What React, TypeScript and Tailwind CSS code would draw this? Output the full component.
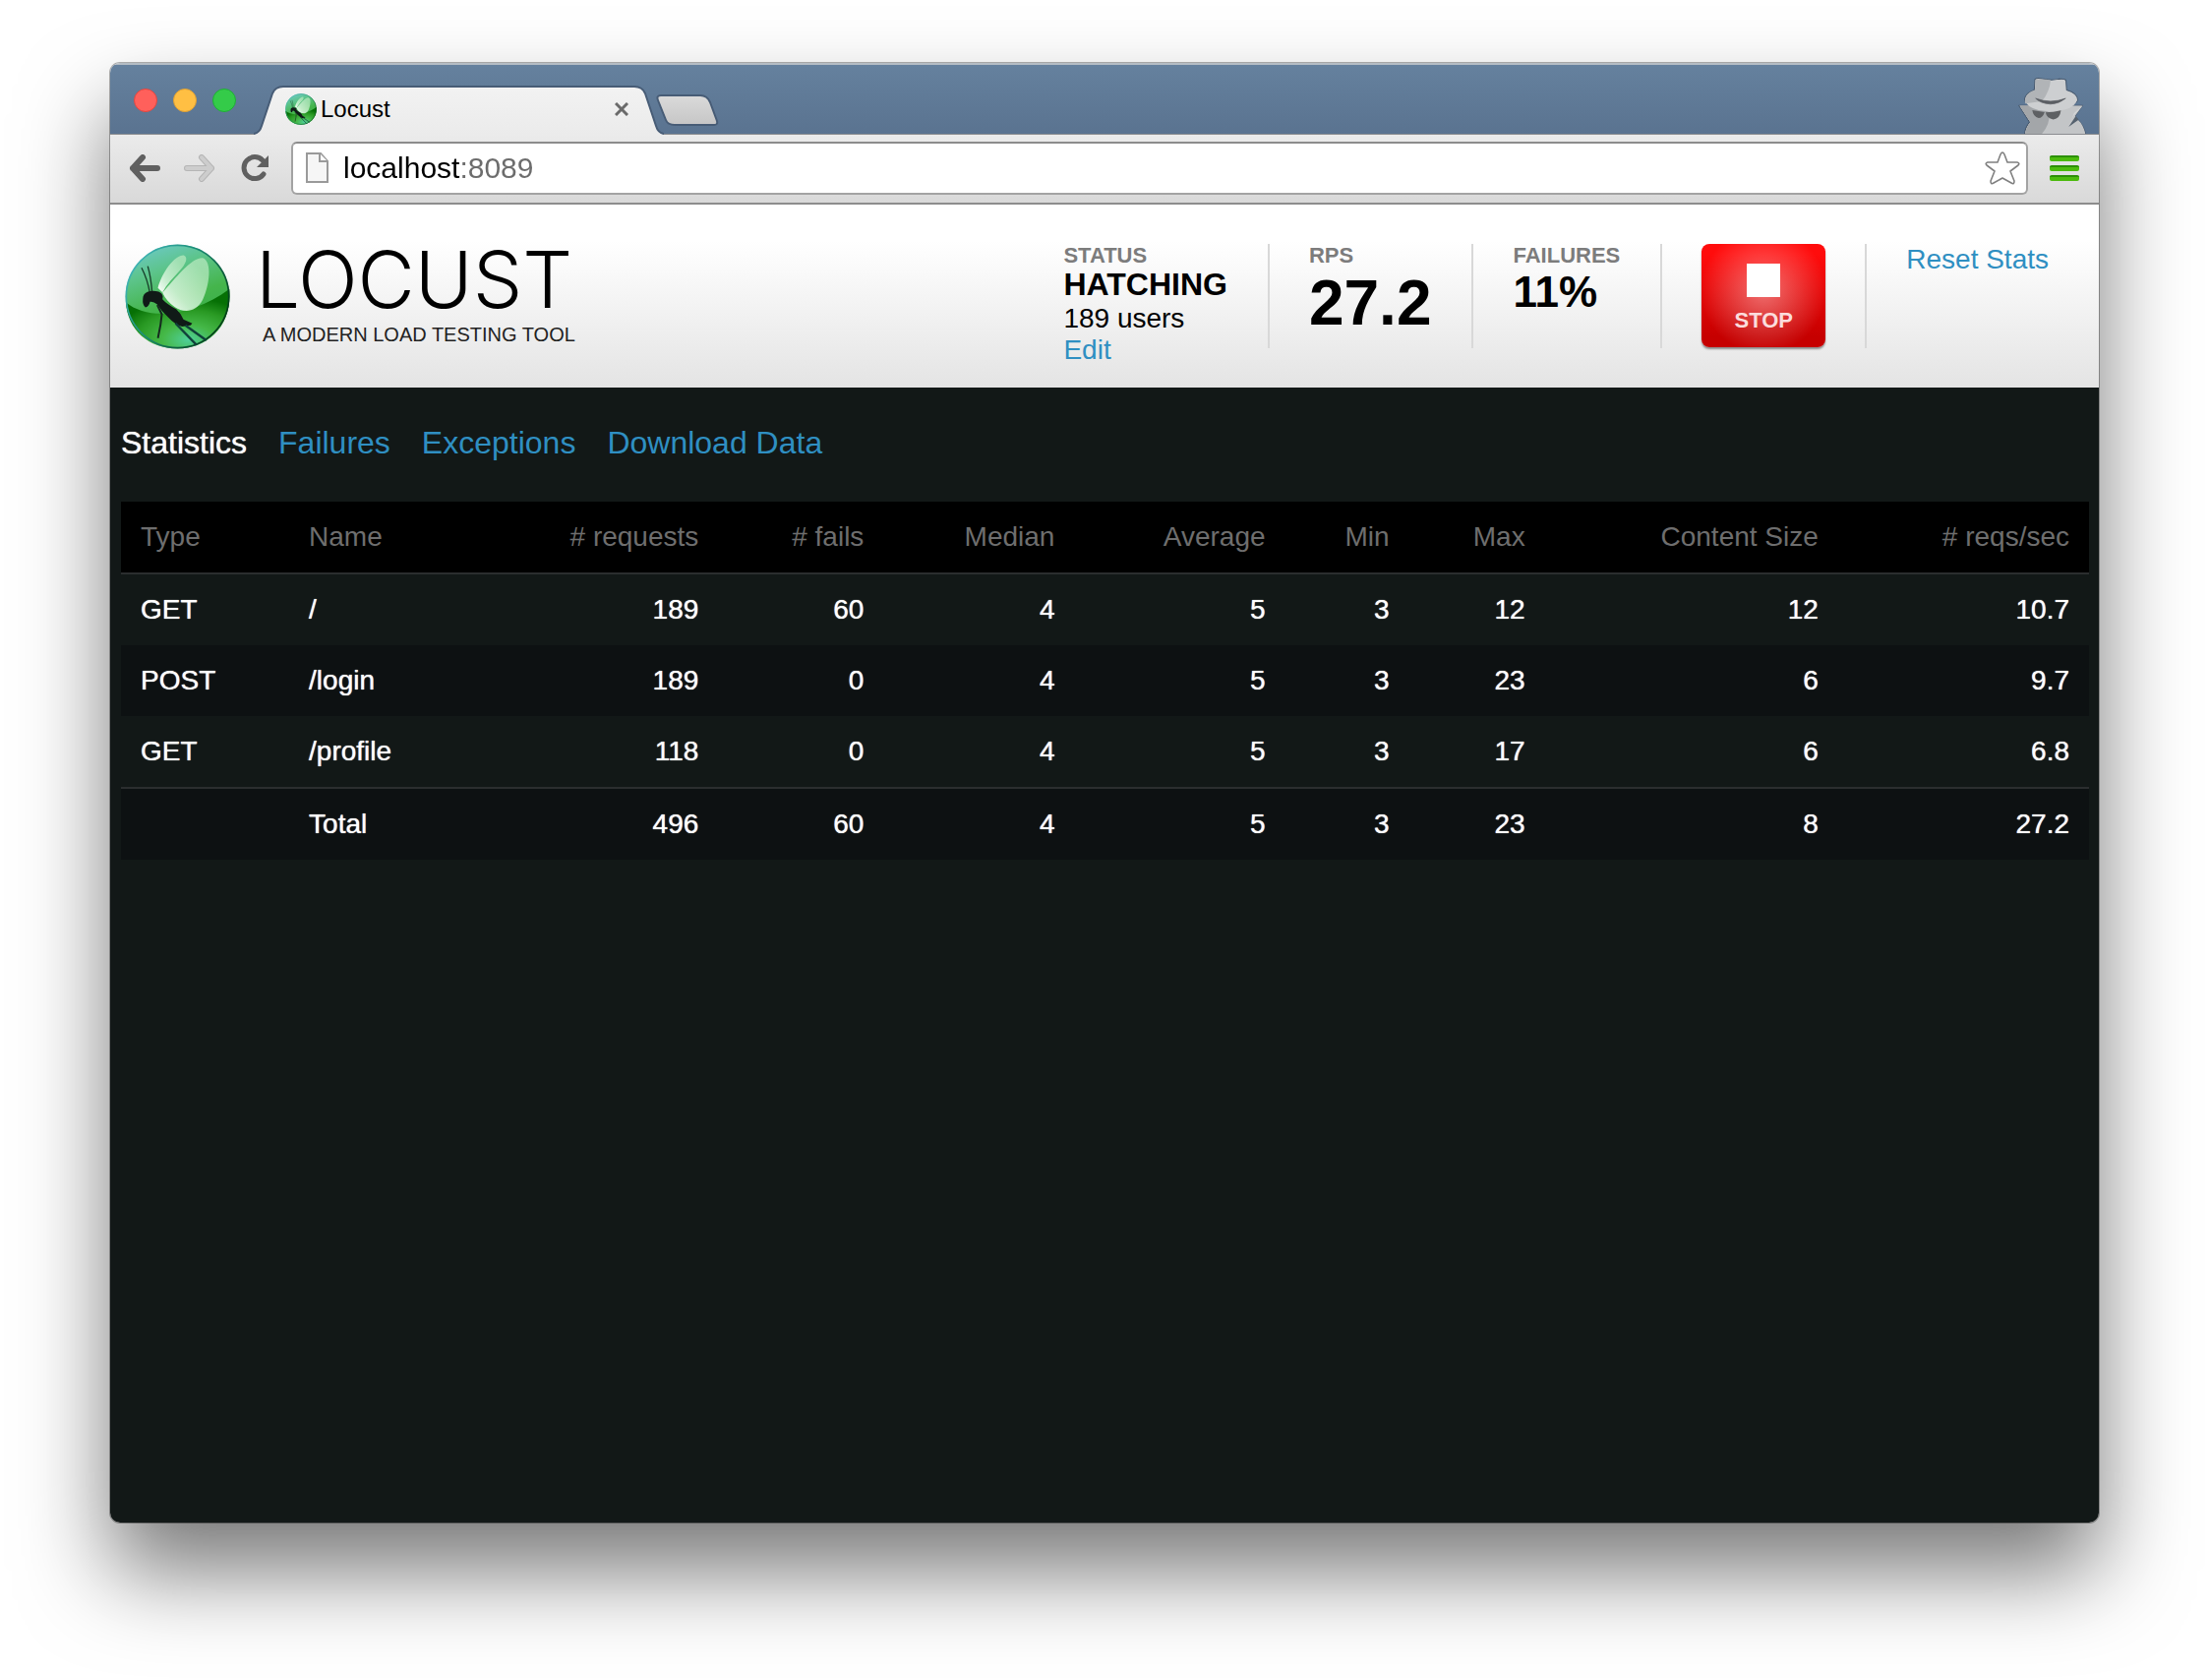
import React, { useState } from "react";

function LocustBall({ className }: { className: string }) {
  return (
    <svg className={className} viewBox="37 37 322 322" aria-hidden="true">
      <defs>
        <linearGradient id="ball" x1="0.25" y1="0" x2="0.6" y2="1">
          <stop offset="0" stopColor="#6cc9c4" />
          <stop offset="0.25" stopColor="#5cc48a" />
          <stop offset="0.55" stopColor="#45b54c" />
          <stop offset="1" stopColor="#2fa94a" />
        </linearGradient>
        <radialGradient id="low" cx="0.6" cy="0.85" r="0.7" fx="0.6" fy="0.85">
          <stop offset="0" stopColor="#4fcf9a" />
          <stop offset="0.35" stopColor="#45b848" />
          <stop offset="0.7" stopColor="#2a9a24" />
          <stop offset="1" stopColor="#067005" />
        </radialGradient>
        <linearGradient id="rim" x1="0" y1="0" x2="1" y2="0.6">
          <stop offset="0" stopColor="#4fc3cc" />
          <stop offset="0.5" stopColor="#1d8f7a" />
          <stop offset="1" stopColor="#05401c" />
        </linearGradient>
        <linearGradient id="wing" x1="0" y1="1" x2="0.8" y2="0.2">
          <stop offset="0" stopColor="#ffffff" />
          <stop offset="0.4" stopColor="#d8f5dc" stopOpacity="0.85" />
          <stop offset="1" stopColor="#b5e8bd" stopOpacity="0.75" />
        </linearGradient>
      </defs>
      <circle cx="198" cy="198" r="159" fill="url(#ball)" />
      <path d="M40 215 C110 275 250 255 357 175 C365 290 290 357 198 357 C110 357 45 300 40 215Z" fill="url(#low)" />
      <circle cx="198" cy="198" r="157" fill="none" stroke="url(#rim)" strokeWidth="5" />
      <path d="M138 172 C150 125 190 70 218 72 C232 78 222 100 205 118 C185 140 165 160 152 185Z" fill="url(#wing)" />
      <path d="M152 186 C190 145 240 78 275 80 C305 90 296 165 275 208 C255 248 215 248 190 230 C172 218 160 204 152 186Z" fill="url(#wing)" />
      <path d="M88 110 Q106 145 113 186 M107 105 Q117 140 120 184" fill="none" stroke="#173d2a" strokeWidth="4" />
      <path d="M92 205 Q92 190 106 184 Q120 178 140 183 Q152 188 153 198 L152 206 Q166 222 194 236 Q208 248 216 268 L243 280 L238 286 L212 290 Q190 284 170 262 Q148 242 136 222 Q124 212 114 214 Q110 230 100 231 Q90 224 92 205Z" fill="#101a17" />
      <path d="M136 224 L150 252 L146 284 L138 325" fill="none" stroke="#15291e" strokeWidth="6" />
      <path d="M192 280 L256 346 M222 286 L286 332" fill="none" stroke="#10403a" strokeWidth="7" />
    </svg>
  );
}

function Incognito() {
  return (
    <svg className="h-[58px] w-[70px]" viewBox="280 88 204 171" aria-hidden="true">
      <g stroke="#44566b" strokeWidth="3" strokeLinejoin="round">
        <path d="M281 174 H472 L449 206 L458 217 Q474 232 481 259 H298 Q300 240 313 224Z" fill="#c3c5c7" />
        <path d="M329 96 Q335 90 350 94 Q378 100 400 95 Q420 93 422 99 L424 128 Q458 138 457 158 Q454 172 420 176 L335 176 Q298 172 298 156 Q300 138 327 128Z" fill="#cdcfd1" />
      </g>
      <path d="M283 175 H472 L449 206 L458 217 Q474 232 480 259 H300 Q302 240 315 224Z" fill="#c3c5c7" />
      <path d="M283 175 H330 L372 195 Q375 230 350 259 H300 Q302 240 315 224Z" fill="#a3a6a9" />
      <path d="M299 158 Q304 180 340 188 Q376 195 418 187 Q452 178 456 156 Q420 150 376 150Z" fill="#cdcfd1" />
      <path d="M331 96 Q355 94 376 98 Q374 130 350 162 L300 168 Q294 140 329 128Z" fill="#b1b4b7" />
      <path d="M331 153 Q376 170 421 153 Q400 170 376 170 Q345 168 331 153Z" fill="#5a5e63" stroke="#5a5e63" strokeWidth="2" />
      <path d="M321 188 Q340 191 358 194 Q352 212 340 212 Q324 208 321 188Z M361 195 Q385 195 407 189 Q404 214 384 216 Q364 213 361 195Z" fill="#5e6063" />
      <path d="M472 175 L430 238 L460 217 L451 206Z" fill="#55616e" />
      <path d="M470 176 L444 206 L432 234 L446 198Z" fill="#d6d8da" />
    </svg>
  );
}

function TitleBar() {
  return (
    <div className="flex h-[72px] items-end border-t-2 border-[#b4bcc4] bg-linear-to-b from-[#65819e] to-[#5a7390]">
      <div className="ml-6 mb-[22px] flex gap-4">
        <button aria-label="Close window" className="size-6 rounded-full border border-[#e2463f] bg-[#ff605b]" />
        <button aria-label="Minimize window" className="size-6 rounded-full border border-[#e0a032] bg-[#ffbf43]" />
        <button aria-label="Zoom window" className="size-6 rounded-full border border-[#1fae36] bg-[#34cb49]" />
      </div>
      <div className="relative z-10 ml-[18px] -mb-px flex h-[50px] w-[417px] items-center pr-9 pb-[2px] pl-8">
        <svg className="absolute inset-0 h-full w-full" viewBox="0 0 417 50" aria-hidden="true">
          <defs>
            <linearGradient id="tab" x1="0" y1="0" x2="0" y2="1">
              <stop offset="0" stopColor="#f2f2f2" />
              <stop offset="1" stopColor="#ebebeb" />
            </linearGradient>
          </defs>
          <path d="M0 50 Q6 48 8 41 L19 8 Q22 1 30 1 H387 Q395 1 398 8 L409 41 Q411 48 417 50Z" fill="url(#tab)" />
          <path d="M0 49 Q6 48 8 41 L19 8 Q22 1 30 1 H387 Q395 1 398 8 L409 41 Q411 48 417 49" fill="none" stroke="#475c76" strokeWidth="2" />
        </svg>
        <LocustBall className="relative size-8" />
        <span className="relative ml-1 flex-1 text-2xl text-black">Locust</span>
        <button aria-label="Close tab" className="relative">
          <svg className="size-[14px]" viewBox="0 0 14 14">
            <path d="M1 1 L13 13 M13 1 L1 13" stroke="#6a6a6a" strokeWidth="3" />
          </svg>
        </button>
      </div>
      <button aria-label="New tab" className="-ml-2 mb-[8px]">
        <svg className="h-8 w-16" viewBox="0 0 64 32">
          <defs>
            <linearGradient id="newtab" x1="0" y1="0" x2="0" y2="1">
              <stop offset="0" stopColor="#dadada" />
              <stop offset="1" stopColor="#c6c6c6" />
            </linearGradient>
          </defs>
          <path d="M5 1 H45 Q52 1 55 8 L62 27 Q63 31 59 31 H19 Q12 31 10 26 L2 6 Q0 1 5 1Z" fill="url(#newtab)" stroke="#475c76" strokeWidth="2" />
        </svg>
      </button>
      <div className="mr-3 ml-auto">
        <Incognito />
      </div>
    </div>
  );
}

function Toolbar() {
  const [url, setUrl] = useState("localhost:8089");
  return (
    <div className="flex h-[72px] items-center border-t border-b-2 border-t-[#8b8d90] border-b-[#8d8d8d] bg-linear-to-b from-[#ebebeb] to-[#d9d9d9] pr-5 pb-[2px] pl-[19px]">
      <button aria-label="Back">
        <svg className="h-7 w-8" viewBox="0 0 32 28">
          <path d="M14 3 L4 14 L14 25 M4 14 H29" fill="none" stroke="#606060" strokeWidth="6" strokeLinecap="round" strokeLinejoin="round" />
        </svg>
      </button>
      <button aria-label="Forward" className="ml-6">
        <svg className="h-7 w-8" viewBox="0 0 32 28">
          <path d="M18 3 L28 14 L18 25 M28 14 H3" fill="none" stroke="#b5b5b5" strokeWidth="6" strokeLinecap="round" strokeLinejoin="round" />
          <path d="M18 3 L28 14 L18 25 M28 14 H3" fill="none" stroke="#cdcdcd" strokeWidth="4" strokeLinecap="round" strokeLinejoin="round" />
        </svg>
      </button>
      <button aria-label="Reload" className="ml-[26px]">
        <svg className="size-7" viewBox="0 0 28 28">
          <path d="M22 6 A11 11 0 1 0 23 20" fill="none" stroke="#606060" strokeWidth="5" strokeLinecap="round" />
          <path d="M28 1 V13 H16Z" fill="#606060" />
        </svg>
      </button>
      <div className="ml-[23px] flex h-[54px] flex-1 items-center rounded-md border-2 border-[#a3a3a3] border-t-[#8c8c8c] bg-white pr-[6px] pl-[13px]">
        <svg className="h-[31px] w-[23px]" viewBox="0 0 23 31" aria-hidden="true">
          <path d="M1 1 H15 L22 9 V30 H1Z" fill="#f6f6f6" stroke="#9a9a9a" strokeWidth="2" />
          <path d="M14 1 V9 H22" fill="#ffffff" stroke="#9a9a9a" strokeWidth="2" />
        </svg>
        <input
          aria-label="Address"
          value={url}
          onChange={(e) => setUrl(e.target.value)}
          className="ml-[15px] h-10 min-w-0 flex-1 bg-linear-[90deg,#000000_119px,#6c6c6c_119px] bg-clip-text text-[30px] leading-10 text-transparent caret-black outline-none"
        />
        <button aria-label="Bookmark this page">
          <svg className="size-9" viewBox="0 0 36 36">
            <path
              d="M16 4 Q18 0 20 4 L23 12 H33 Q36 13 34 15 L26 21 L30 31 Q30 35 27 33 L18 28 L9 33 Q6 35 6 31 L10 21 L2 15 Q0 13 3 12 H13Z"
              fill="#ffffff"
              stroke="#808080"
              strokeWidth="1.6"
              strokeLinejoin="round"
            />
          </svg>
        </button>
      </div>
      <button aria-label="Menu" className="ml-[22px] flex w-[30px] flex-col gap-1">
        <span className="h-[6px] rounded-xs border-t-2 border-[#2c8f06] bg-[#4cba0e]" />
        <span className="h-[6px] rounded-xs border-t-2 border-[#2c8f06] bg-[#4cba0e]" />
        <span className="h-[6px] rounded-xs border-t-2 border-[#2c8f06] bg-[#4cba0e]" />
      </button>
    </div>
  );
}

function Box({ label, children }: { label: string; children: React.ReactNode }) {
  return (
    <div className="h-[106px] border-r-2 border-[#d8d8d8] pr-[41px] pl-10">
      <div className="text-[22px] leading-6 font-bold text-[#7c7c7c]">{label}</div>
      {children}
    </div>
  );
}

function Header() {
  return (
    <header className="flex h-[186px] items-start justify-between bg-linear-to-b from-white from-20% to-[#e4e4e4] pt-10 pr-[51px] pl-[15px]">
      <a href="#home" className="flex" aria-label="Locust home">
        <LocustBall className="size-[107px]" />
        <span className="ml-[26px] block">
          <span className="block font-['Inter'] text-[80px] leading-[72px] font-light text-black">LOCUST</span>
          <span className="ml-[7px] block text-xl leading-10 text-[#222222]">A MODERN LOAD TESTING TOOL</span>
        </span>
      </a>
      <div className="flex">
        <Box label="STATUS">
          <div className="text-[32px] leading-[34px] font-bold">HATCHING</div>
          <div className="mt-[2px] text-[28px] leading-8">189 users</div>
          <a href="#edit" className="block text-[28px] leading-8 text-[#2f8fc2]">Edit</a>
        </Box>
        <Box label="RPS">
          <div className="text-[64px] leading-[72px] font-bold">27.2</div>
        </Box>
        <Box label="FAILURES">
          <div className="text-[44px] leading-[50px] font-bold">11%</div>
        </Box>
        <div className="h-[106px] border-r-2 border-[#d8d8d8] px-10">
          <button className="flex h-[105px] w-[126px] flex-col items-center rounded-lg bg-[radial-gradient(circle_at_50%_45%,rgba(255,255,255,0.42),rgba(255,255,255,0)_75%),linear-gradient(to_bottom,#ff0c0c_10%,#c60000_90%)] pt-5 shadow-[0_2px_2px_rgba(0,0,0,0.4)]">
            <span className="size-[34px] bg-white" />
            <span className="mt-3 text-[22px] leading-6 font-bold text-[#fbdcdc]">STOP</span>
          </button>
        </div>
        <a href="#reset" className="ml-10 text-[28px] leading-8 text-[#2f8fc2]">Reset Stats</a>
      </div>
    </header>
  );
}

const columns = [
  { label: "Type", cls: "w-[8.55%] text-left" },
  { label: "Name", cls: "w-[13%] text-left" },
  { label: "# requests", cls: "w-[8.8%] text-right" },
  { label: "# fails", cls: "w-[8.4%] text-right" },
  { label: "Median", cls: "w-[9.7%] text-right" },
  { label: "Average", cls: "w-[10.7%] text-right" },
  { label: "Min", cls: "w-[6.3%] text-right" },
  { label: "Max", cls: "w-[6.9%] text-right" },
  { label: "Content Size", cls: "w-[14.9%] text-right" },
  { label: "# reqs/sec", cls: "w-[12.75%] text-right" },
];

const rows = [
  ["GET", "/", "189", "60", "4", "5", "3", "12", "12", "10.7"],
  ["POST", "/login", "189", "0", "4", "5", "3", "23", "6", "9.7"],
  ["GET", "/profile", "118", "0", "4", "5", "3", "17", "6", "6.8"],
];

const total = ["", "Total", "496", "60", "4", "5", "3", "23", "8", "27.2"];

function Cells({ values }: { values: string[] }) {
  return (
    <>
      {values.map((v, i) => (
        <td
          key={i}
          className={
            i < 2
              ? "px-5 py-5 text-left [text-shadow:0_0_1px_#ffffff]"
              : "px-5 py-5 text-right [text-shadow:0_0_1px_#ffffff]"
          }
        >
          {v}
        </td>
      ))}
    </>
  );
}

export default function App() {
  return (
    <div className="flex min-h-screen flex-col bg-white px-28 pt-16 pb-40 font-['Liberation_Sans',Arial,sans-serif] text-black">
      <div className="flex flex-1 flex-col rounded-[10px] shadow-[0_50px_90px_rgba(0,0,0,0.53),0_0_0_1px_rgba(0,0,0,0.3)]">
        <div className="flex flex-1 flex-col overflow-hidden rounded-[10px]">
          <TitleBar />
          <Toolbar />
          <Header />
          <main className="flex-1 bg-[#121817] pt-9 pr-[10px] pl-[11px] text-white">
            <nav className="mb-10 flex gap-8 text-[32px] leading-10 text-[#2f8fc2]">
              <a href="#statistics" aria-current="page" className="text-white [text-shadow:0_0_1px_#ffffff]">Statistics</a>
              <a href="#failures">Failures</a>
              <a href="#exceptions">Exceptions</a>
              <a href="#download">Download Data</a>
            </nav>
            <table className="w-full table-fixed border-collapse text-[28px] leading-8">
              <thead>
                <tr className="bg-black text-[#6e6e6e]">
                  {columns.map((c) => (
                    <th key={c.label} scope="col" className={c.cls}>
                      <div className="px-5 py-5 font-normal whitespace-nowrap">{c.label}</div>
                    </th>
                  ))}
                </tr>
              </thead>
              <tbody className="border-y-2 border-[#2b2e2f]">
                {rows.map((r) => (
                  <tr key={r[1]} className="even:bg-[#0d1112]">
                    <Cells values={r} />
                  </tr>
                ))}
              </tbody>
              <tfoot>
                <tr className="bg-[#0d1112]">
                  <Cells values={total} />
                </tr>
              </tfoot>
            </table>
          </main>
        </div>
      </div>
    </div>
  );
}
